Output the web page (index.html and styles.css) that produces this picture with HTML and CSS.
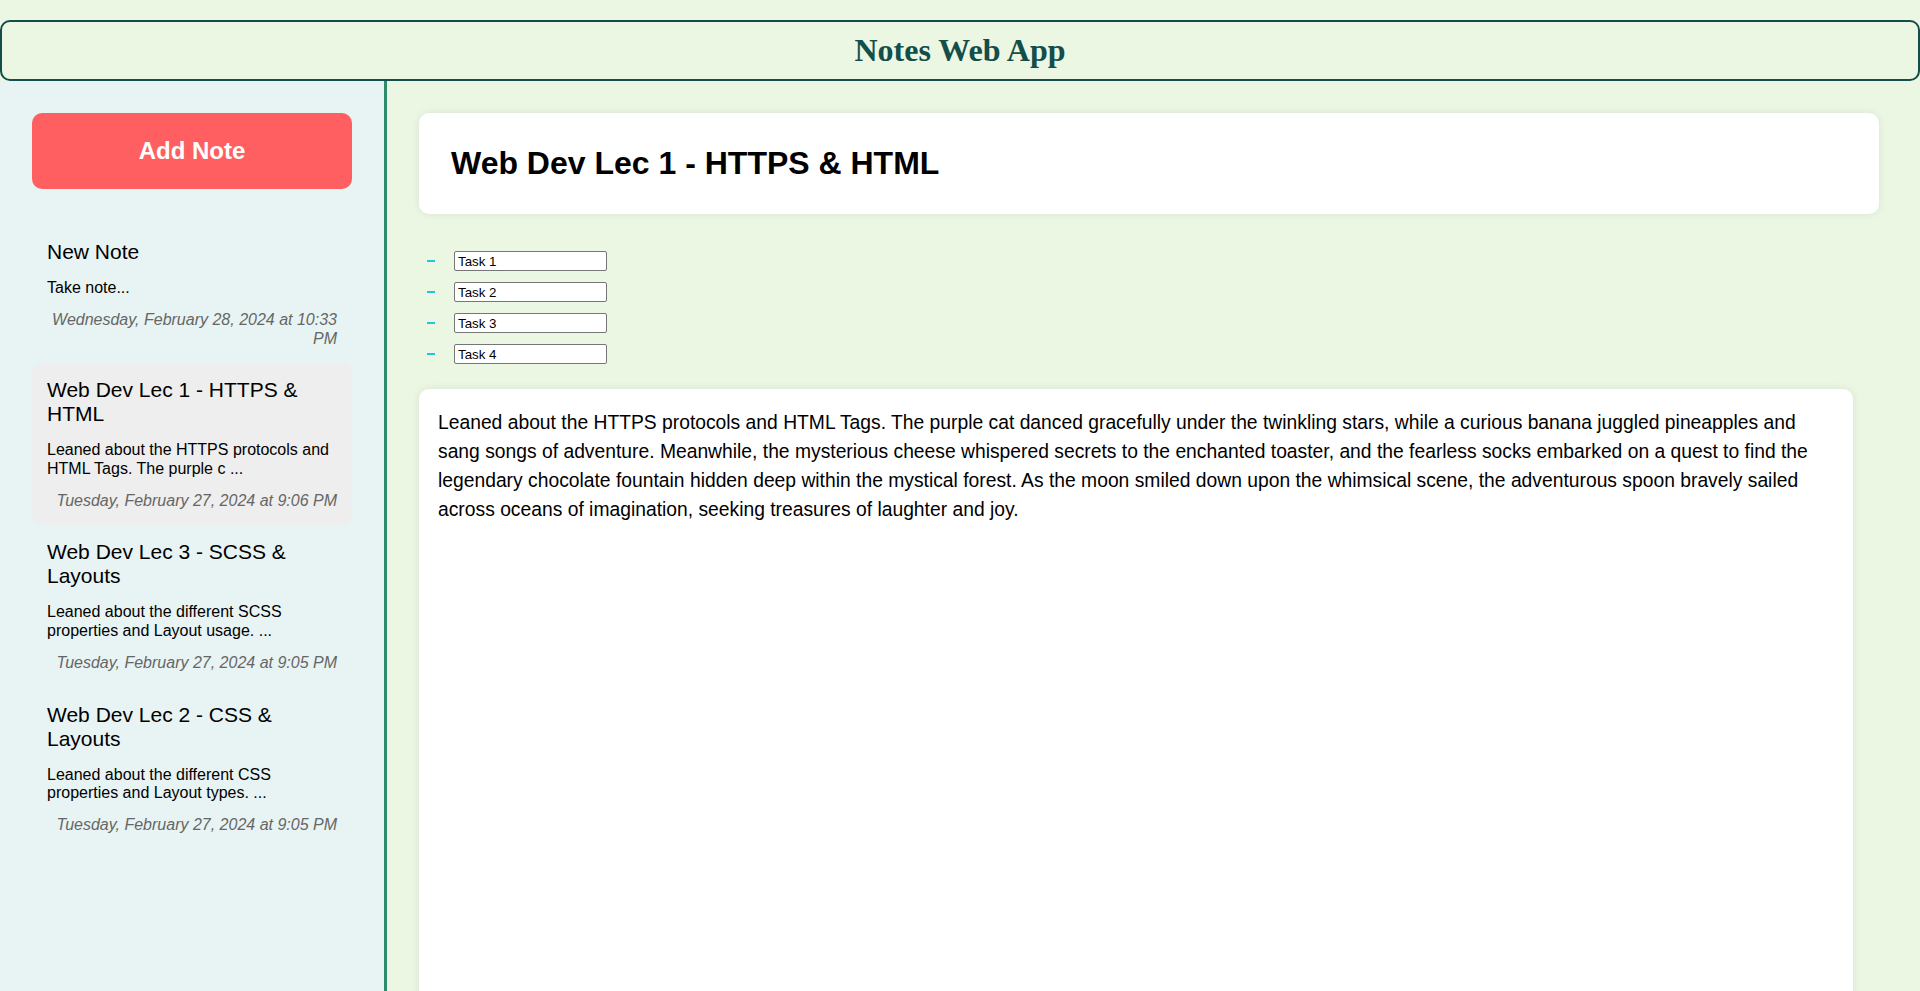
FILE: index.html
```html
<!DOCTYPE html>
<html lang="en">
<head>
<meta charset="utf-8">
<title>Notes Web App</title>
<link rel="stylesheet" href="styles.css">
</head>
<body>
<header class="app-header">
  <h1 class="app-title">Notes Web App</h1>
</header>
<div class="layout">
  <aside class="sidebar">
    <button class="add-btn">Add Note</button>
    <ul class="note-list">
      <li class="note-item">
        <div class="note-title">New Note</div>
        <div class="note-preview">Take note...</div>
        <div class="note-date">Wednesday, February 28, 2024 at 10:33 PM</div>
      </li>
      <li class="note-item active">
        <div class="note-title">Web Dev Lec 1 - HTTPS &amp; HTML</div>
        <div class="note-preview">Leaned about the HTTPS protocols and HTML Tags. The purple c ...</div>
        <div class="note-date">Tuesday, February 27, 2024 at 9:06 PM</div>
      </li>
      <li class="note-item">
        <div class="note-title">Web Dev Lec 3 - SCSS &amp; Layouts</div>
        <div class="note-preview">Leaned about the different SCSS properties and Layout usage. ...</div>
        <div class="note-date">Tuesday, February 27, 2024 at 9:05 PM</div>
      </li>
      <li class="note-item">
        <div class="note-title">Web Dev Lec 2 - CSS &amp; Layouts</div>
        <div class="note-preview">Leaned about the different CSS properties and Layout types. ...</div>
        <div class="note-date">Tuesday, February 27, 2024 at 9:05 PM</div>
      </li>
    </ul>
  </aside>
  <main class="main">
    <div class="title-card">
      <h2 class="note-heading">Web Dev Lec 1 - HTTPS &amp; HTML</h2>
    </div>
    <ul class="task-list">
      <li class="task-row"><span class="task-dash"></span><input class="task-input" type="text" value="Task 1"></li>
      <li class="task-row"><span class="task-dash"></span><input class="task-input" type="text" value="Task 2"></li>
      <li class="task-row"><span class="task-dash"></span><input class="task-input" type="text" value="Task 3"></li>
      <li class="task-row"><span class="task-dash"></span><input class="task-input" type="text" value="Task 4"></li>
    </ul>
    <div class="content-card">Leaned about the HTTPS protocols and HTML Tags. The purple cat danced gracefully under the twinkling stars, while a curious banana juggled pineapples and sang songs of adventure. Meanwhile, the mysterious cheese whispered secrets to the enchanted toaster, and the fearless socks embarked on a quest to find the legendary chocolate fountain hidden deep within the mystical forest. As the moon smiled down upon the whimsical scene, the adventurous spoon bravely sailed across oceans of imagination, seeking treasures of laughter and joy.</div>
  </main>
</div>
</body>
</html>
```

FILE: styles.css
```css
html, body {
  margin: 0;
  padding: 0;
  height: 991px;
  overflow: hidden;
}

body {
  background: #ebf7e3;
  font-family: "Liberation Sans", Arial, Helvetica, sans-serif;
  color: #000;
  padding-top: 20px;
  box-sizing: border-box;
}

.app-header {
  height: 61px;
  box-sizing: border-box;
  border: 2px solid #134e4a;
  border-radius: 10px;
  display: flex;
  align-items: center;
  justify-content: center;
}

.app-title {
  margin: 0;
  font-family: "Liberation Serif", "Times New Roman", serif;
  font-weight: bold;
  font-size: 32px;
  color: #134e4a;
}

.layout {
  display: flex;
  height: 910px;
}

.sidebar {
  width: 320px;
  padding: 32px 32px 0 32px;
  background: #e8f4f4;
  border-right: 3px solid #2c8c6c;
  flex-shrink: 0;
}

.add-btn {
  display: block;
  width: 320px;
  height: 76px;
  border: none;
  border-radius: 10px;
  background: #ff5f61;
  color: #fff;
  font-family: "Liberation Sans", Arial, sans-serif;
  font-weight: bold;
  font-size: 24px;
  margin: 0 0 36px 0;
  padding: 0;
}

.note-list {
  list-style: none;
  margin: 0;
  padding: 0;
}

.note-item {
  padding: 15px;
  border-radius: 10px;
}

.note-item.active {
  background: #eeeeee;
}

.note-title {
  font-size: 21px;
  line-height: 24px;
  margin-bottom: 15px;
}

.note-preview {
  font-size: 16px;
  line-height: 18.4px;
  margin-bottom: 14px;
}

.note-date {
  font-size: 16px;
  line-height: 18.4px;
  font-style: italic;
  color: #666;
  text-align: right;
}

.main {
  flex: 1;
  padding: 32px 41px 0 32px;
  overflow: hidden;
}

.title-card {
  background: #fff;
  border-radius: 10px;
  padding: 32px;
  box-shadow: 0 0 8px rgba(0, 0, 0, 0.08);
}

.note-heading {
  margin: 0;
  font-size: 32px;
  line-height: 37px;
  font-weight: bold;
}

.task-list {
  list-style: none;
  margin: 37px 0 25px 0;
  padding: 0 0 0 8px;
}

.task-row {
  display: flex;
  align-items: center;
  height: 20px;
  margin-bottom: 11px;
}

.task-row:last-child {
  margin-bottom: 0;
}

.task-dash {
  display: inline-block;
  width: 8px;
  height: 2px;
  background: #22c6dc;
  margin-right: 19px;
}

.task-input {
  width: 153px;
  height: 20px;
  box-sizing: border-box;
  border: 1px solid #767676;
  border-radius: 2px;
  padding: 1px 3px;
  font-family: "Liberation Sans", Arial, sans-serif;
  font-size: 13.33px;
  color: #000;
  background: #fff;
}

.content-card {
  width: 1377px;
  min-height: 700px;
  background: #fff;
  border-radius: 10px;
  padding: 19px 38px 19px 19px;
  font-size: 19.3px;
  line-height: 29px;
  box-shadow: 0 0 8px rgba(0, 0, 0, 0.08);
}
```
